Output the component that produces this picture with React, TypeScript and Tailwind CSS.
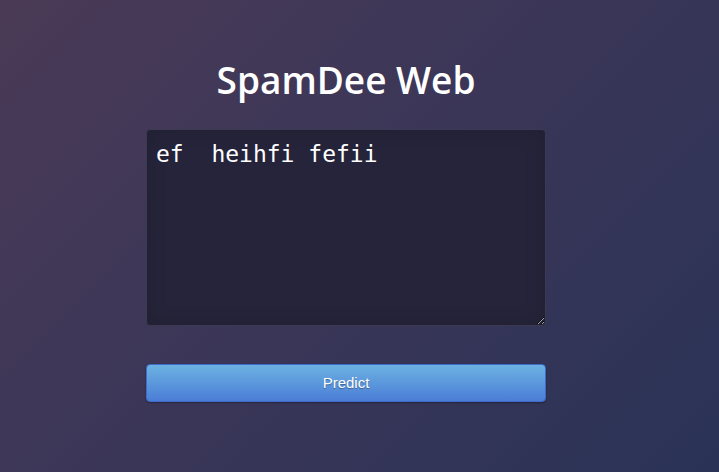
import React from "react";

export default function App() {
  return (
    <div className="min-h-screen w-full bg-[linear-gradient(135deg,#4a3a56_0%,#3a3658_50%,#2a3356_100%)]">
      <div className="pl-[146px] pt-[55px] flex flex-col w-[546px]">
        <h1 className="text-center text-white text-[37px] leading-[50px] font-semibold [font-family:'Open_Sans',sans-serif]">
          SpamDee Web
        </h1>
        <textarea
          defaultValue="ef  heihfi fefii"
          className="mt-[24px] w-[400px] h-[197px] rounded-[4px] border border-[#3b3a52] bg-[#25243a] text-white pl-[9px] pr-[9px] pt-[11px] pb-[10px] text-[23px] leading-[27px] [font-family:'DejaVu_Sans_Mono',monospace] outline-none shadow-[inset_0_0_20px_rgba(0,0,0,0.15)] resize"
        />
        <button className="mt-[38px] w-[400px] h-[38px] rounded-[4px] border border-[#3f6cc8] bg-[linear-gradient(180deg,#6cb2e2_0%,#4b7dd6_100%)] text-white text-[15px] [font-family:'Liberation_Sans',Arial,sans-serif] [text-shadow:0_1px_1px_rgba(0,0,0,0.35)] shadow-[0_1px_2px_rgba(0,0,0,0.3)]">
          Predict
        </button>
      </div>
    </div>
  );
}
